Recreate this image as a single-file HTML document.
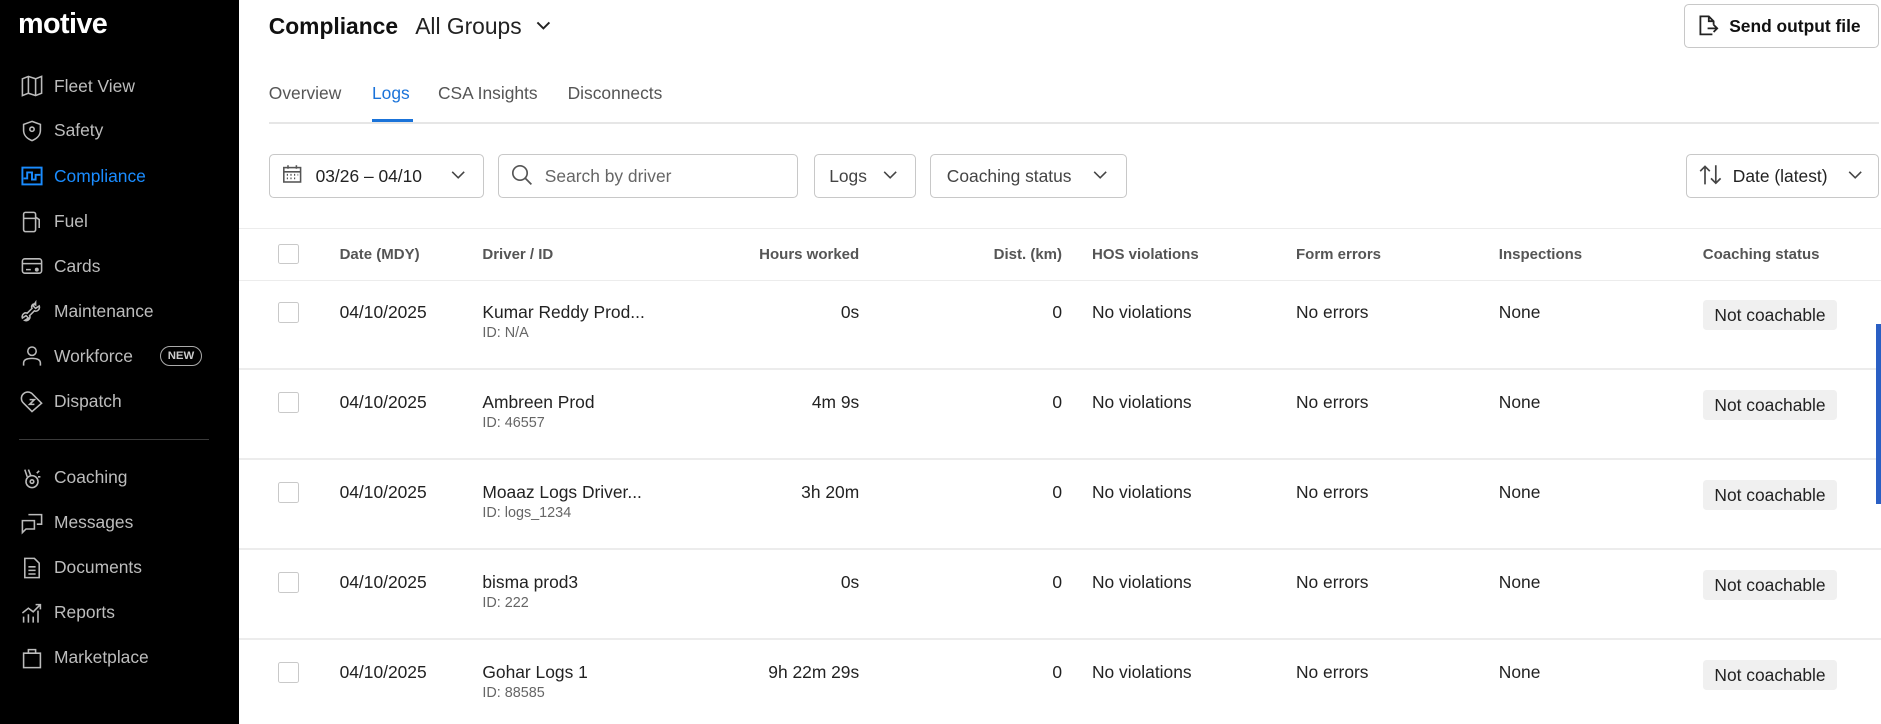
<!DOCTYPE html>
<html><head><meta charset="utf-8"><style>
html,body{margin:0;padding:0;background:#fff;overflow:hidden}
#r{zoom:1.2;width:1568px;height:603px;position:relative;font-family:"Liberation Sans",sans-serif;color:#222;overflow:hidden}
.a{position:absolute;white-space:nowrap}
.sb{left:0;top:0;width:199px;height:603px;background:#000}
.nav{left:45px;font-size:14.5px;color:#bdbdbd;line-height:18px}
.ic{left:17px;width:20px;height:20px}
.box{border:1px solid #c8c8c8;border-radius:4px;background:#fff;box-sizing:border-box}
.ft{font-size:14.5px;color:#444;line-height:18px}
.hd{font-size:12.5px;font-weight:bold;color:#555;top:205px}
.cell{font-size:14.5px;color:#222;line-height:18px}
.id{font-size:12px;color:#666}
.cb{left:232px;width:17px;height:17px;border:1px solid #c9c9c9;border-radius:2px;box-sizing:border-box}
.pill{left:1419px;width:112px;height:25px;background:#f0f0f0;border-radius:3px;font-size:14.5px;line-height:25px;text-align:center;color:#222}
.hl{height:1px;background:#ececec;left:199px;width:1369px}
</style></head><body><div id="r">
<div class="a sb"></div>
<div class="a" style="left:15px;top:7px;font-size:24px;font-weight:bold;color:#fff;letter-spacing:-0.5px">motive</div>
<svg class="a ic" style="top:62px" viewBox="0 0 20 20" fill="none" stroke="#bbb" stroke-width="1.3"><path d="M2 4l5-2 6 2 5-2v14l-5 2-6-2-5 2z M7 2v14 M13 4v14"/></svg>
<div class="a nav" style="top:63px">Fleet View</div>
<svg class="a ic" style="top:99px" viewBox="0 0 20 20" fill="none" stroke="#bbb" stroke-width="1.3"><path d="M10 2l7 2.5v5c0 4-3 7-7 8.5-4-1.5-7-4.5-7-8.5v-5z"/><circle cx="10" cy="8.5" r="1.8"/></svg>
<div class="a nav" style="top:100px">Safety</div>
<svg class="a ic" style="top:137px" viewBox="0 0 20 20" fill="none" stroke="#1a8cff" stroke-width="1.6"><rect x="2" y="3" width="16" height="14"/><path d="M3 12h3V7h4v6h3V9h4"/></svg>
<div class="a nav" style="top:138px;color:#1a8cff">Compliance</div>
<svg class="a ic" style="top:175px" viewBox="0 0 20 20" fill="none" stroke="#bbb" stroke-width="1.3"><rect x="3" y="2" width="10" height="16" rx="1.5"/><path d="M3 7h10 M13 6l3 2v7"/></svg>
<div class="a nav" style="top:176px">Fuel</div>
<svg class="a ic" style="top:212px" viewBox="0 0 20 20" fill="none" stroke="#bbb" stroke-width="1.3"><rect x="2" y="4" width="16" height="12" rx="2"/><path d="M2 8h16 M5 13h4"/><circle cx="14" cy="13" r="1" fill="#bbb"/></svg>
<div class="a nav" style="top:213px">Cards</div>
<svg class="a ic" style="top:250px" viewBox="0 0 20 20" fill="none" stroke="#bbb" stroke-width="1.3"><path d="M13 2l-2 3 2 2 3-2c1 3-2 5-4 4l-4 4c1 2-1 5-4 4l3-2-2-2-3 2c-1-3 2-5 4-4l4-4c-1-2 1-5 3-3z"/></svg>
<div class="a nav" style="top:251px">Maintenance</div>
<svg class="a ic" style="top:287px" viewBox="0 0 20 20" fill="none" stroke="#bbb" stroke-width="1.3"><circle cx="10" cy="6" r="3.5"/><path d="M3 18v-2c0-3 3-4 7-4s7 1 7 4v2"/></svg>
<div class="a nav" style="top:288px">Workforce</div>
<div class="a" style="left:133px;top:288px;width:34px;height:15px;border:1px solid #aaa;border-radius:9px;font-size:9.5px;font-weight:bold;color:#ccc;text-align:center;line-height:15px">NEW</div>
<svg class="a ic" style="top:325px" viewBox="0 0 20 20" fill="none" stroke="#bbb" stroke-width="1.3"><path d="M10 18l-7-7a5 5 0 0 1 7-8l1 1 7 7z"/><path d="M8 8h4l-4 4h4"/></svg>
<div class="a nav" style="top:326px">Dispatch</div>
<div class="a" style="left:16px;top:366px;width:158px;height:1px;background:#3a3a3a"></div>
<svg class="a ic" style="top:388px" viewBox="0 0 20 20" fill="none" stroke="#bbb" stroke-width="1.3"><circle cx="10" cy="13" r="5"/><circle cx="10" cy="13" r="1.5"/><path d="M6 9L4 3 M9 8l-2-5 M14 6l2-2 M15 9h2"/></svg>
<div class="a nav" style="top:389px">Coaching</div>
<svg class="a ic" style="top:426px" viewBox="0 0 20 20" fill="none" stroke="#bbb" stroke-width="1.3"><path d="M7 3h11v8h-4 M2 8h10v7H5l-3 3z"/></svg>
<div class="a nav" style="top:427px">Messages</div>
<svg class="a ic" style="top:463px" viewBox="0 0 20 20" fill="none" stroke="#bbb" stroke-width="1.3"><path d="M4 2h8l4 4v12H4z M7 9h6 M7 12h6 M7 15h6"/></svg>
<div class="a nav" style="top:464px">Documents</div>
<svg class="a ic" style="top:501px" viewBox="0 0 20 20" fill="none" stroke="#bbb" stroke-width="1.3"><path d="M3 18v-5 M7 18v-7 M11 18v-5 M15 18V8 M2 10l5-4 4 3 6-6 M13 3h4v4"/></svg>
<div class="a nav" style="top:502px">Reports</div>
<svg class="a ic" style="top:538px" viewBox="0 0 20 20" fill="none" stroke="#bbb" stroke-width="1.3"><path d="M3 6h14v12H3z M7 6V3h6v3"/></svg>
<div class="a nav" style="top:539px">Marketplace</div>

<div class="a" style="left:224px;top:11px;font-size:19px;font-weight:bold;color:#111">Compliance</div>
<div class="a" style="left:346px;top:11px;font-size:19px;color:#222">All Groups</div>
<svg class="a" style="left:446px;top:17px" width="14" height="10" viewBox="0 0 14 10" fill="none" stroke="#222" stroke-width="1.6"><path d="M2 2l5 5 5-5"/></svg>
<div class="a box" style="left:1403px;top:3px;width:163px;height:37px"></div>
<svg class="a" style="left:1415px;top:12px" width="18" height="19" viewBox="0 0 18 19" fill="none" stroke="#222" stroke-width="1.5"><path d="M12 17H2V2h7l4 4v3 M9 2v4h4 M8 12h8 M13 9l3 3-3 3"/></svg>
<div class="a" style="left:1441px;top:13px;font-size:14.5px;font-weight:bold;color:#111">Send output file</div>

<div class="a ft" style="left:224px;top:69px;color:#555">Overview</div>
<div class="a ft" style="left:310px;top:69px;color:#1a73d9">Logs</div>
<div class="a ft" style="left:365px;top:69px;color:#555">CSA Insights</div>
<div class="a ft" style="left:473px;top:69px;color:#555">Disconnects</div>
<div class="a" style="left:224px;top:102px;width:1342px;height:1px;background:#e6e6e6"></div>
<div class="a" style="left:310px;top:99px;width:34px;height:3px;background:#1a73d9"></div>

<div class="a box" style="left:224px;top:128px;width:179px;height:37px"></div>
<svg class="a" style="left:235px;top:137px" width="17" height="17" viewBox="0 0 17 17" fill="none" stroke="#555" stroke-width="1.3"><rect x="1.5" y="3" width="14" height="12"/><path d="M1.5 6.5h14 M5 1v3 M12 1v3"/><path d="M4 9h1M7 9h1M10 9h1M13 9h0.5M4 12h1M7 12h1M10 12h1" stroke-width="1.5"/></svg>
<div class="a ft" style="left:263px;top:138px;color:#222">03/26 – 04/10</div>
<svg class="a" style="left:376px;top:142px" width="12" height="8" viewBox="0 0 12 8" fill="none" stroke="#444" stroke-width="1.3"><path d="M1 1.5l5 5 5-5"/></svg>
<div class="a box" style="left:415px;top:128px;width:250px;height:37px"></div>
<svg class="a" style="left:426px;top:137px" width="18" height="18" viewBox="0 0 18 18" fill="none" stroke="#555" stroke-width="1.4"><circle cx="7.5" cy="7.5" r="6"/><path d="M12 12l5 5"/></svg>
<div class="a ft" style="left:454px;top:138px;color:#666">Search by driver</div>
<div class="a box" style="left:678px;top:128px;width:85px;height:37px"></div>
<div class="a ft" style="left:691px;top:138px">Logs</div>
<svg class="a" style="left:736px;top:142px" width="12" height="8" viewBox="0 0 12 8" fill="none" stroke="#444" stroke-width="1.3"><path d="M1 1.5l5 5 5-5"/></svg>
<div class="a box" style="left:775px;top:128px;width:164px;height:37px"></div>
<div class="a ft" style="left:789px;top:138px">Coaching status</div>
<svg class="a" style="left:911px;top:142px" width="12" height="8" viewBox="0 0 12 8" fill="none" stroke="#444" stroke-width="1.3"><path d="M1 1.5l5 5 5-5"/></svg>
<div class="a box" style="left:1405px;top:128px;width:161px;height:37px"></div>
<svg class="a" style="left:1416px;top:137px" width="20" height="18" viewBox="0 0 20 18" fill="none" stroke="#444" stroke-width="1.4"><path d="M5 17V2 M1 6l4-4 4 4 M14 1v15 M10 12l4 4 4-4"/></svg>
<div class="a ft" style="left:1444px;top:138px;color:#222">Date (latest)</div>
<svg class="a" style="left:1540px;top:142px" width="12" height="8" viewBox="0 0 12 8" fill="none" stroke="#444" stroke-width="1.3"><path d="M1 1.5l5 5 5-5"/></svg>

<div class="a hl" style="top:190px"></div>
<div class="a cb" style="top:203px"></div>
<div class="a hd" style="left:283px">Date (MDY)</div>
<div class="a hd" style="left:402px">Driver / ID</div>
<div class="a hd" style="left:600px;width:116px;text-align:right">Hours worked</div>
<div class="a hd" style="left:770px;width:115px;text-align:right">Dist. (km)</div>
<div class="a hd" style="left:910px">HOS violations</div>
<div class="a hd" style="left:1080px">Form errors</div>
<div class="a hd" style="left:1249px">Inspections</div>
<div class="a hd" style="left:1419px">Coaching status</div>
<div class="a hl" style="top:233px"></div>

<div class="a cb" style="top:252px"></div>
<div class="a cell" style="left:283px;top:252px">04/10/2025</div>
<div class="a cell" style="left:402px;top:252px">Kumar Reddy Prod...</div>
<div class="a id" style="left:402px;top:271px">ID: N/A</div>
<div class="a cell" style="left:560px;width:156px;text-align:right;top:252px">0s</div>
<div class="a cell" style="left:770px;width:115px;text-align:right;top:252px">0</div>
<div class="a cell" style="left:910px;top:252px">No violations</div>
<div class="a cell" style="left:1080px;top:252px">No errors</div>
<div class="a cell" style="left:1249px;top:252px">None</div>
<div class="a pill" style="top:250px">Not coachable</div>
<div class="a hl" style="top:307px"></div>

<div class="a cb" style="top:327px"></div>
<div class="a cell" style="left:283px;top:327px">04/10/2025</div>
<div class="a cell" style="left:402px;top:327px">Ambreen Prod</div>
<div class="a id" style="left:402px;top:346px">ID: 46557</div>
<div class="a cell" style="left:560px;width:156px;text-align:right;top:327px">4m 9s</div>
<div class="a cell" style="left:770px;width:115px;text-align:right;top:327px">0</div>
<div class="a cell" style="left:910px;top:327px">No violations</div>
<div class="a cell" style="left:1080px;top:327px">No errors</div>
<div class="a cell" style="left:1249px;top:327px">None</div>
<div class="a pill" style="top:325px">Not coachable</div>
<div class="a hl" style="top:382px"></div>

<div class="a cb" style="top:402px"></div>
<div class="a cell" style="left:283px;top:402px">04/10/2025</div>
<div class="a cell" style="left:402px;top:402px">Moaaz Logs Driver...</div>
<div class="a id" style="left:402px;top:421px">ID: logs_1234</div>
<div class="a cell" style="left:560px;width:156px;text-align:right;top:402px">3h 20m</div>
<div class="a cell" style="left:770px;width:115px;text-align:right;top:402px">0</div>
<div class="a cell" style="left:910px;top:402px">No violations</div>
<div class="a cell" style="left:1080px;top:402px">No errors</div>
<div class="a cell" style="left:1249px;top:402px">None</div>
<div class="a pill" style="top:400px">Not coachable</div>
<div class="a hl" style="top:457px"></div>

<div class="a cb" style="top:477px"></div>
<div class="a cell" style="left:283px;top:477px">04/10/2025</div>
<div class="a cell" style="left:402px;top:477px">bisma prod3</div>
<div class="a id" style="left:402px;top:496px">ID: 222</div>
<div class="a cell" style="left:560px;width:156px;text-align:right;top:477px">0s</div>
<div class="a cell" style="left:770px;width:115px;text-align:right;top:477px">0</div>
<div class="a cell" style="left:910px;top:477px">No violations</div>
<div class="a cell" style="left:1080px;top:477px">No errors</div>
<div class="a cell" style="left:1249px;top:477px">None</div>
<div class="a pill" style="top:475px">Not coachable</div>
<div class="a hl" style="top:532px"></div>

<div class="a cb" style="top:552px"></div>
<div class="a cell" style="left:283px;top:552px">04/10/2025</div>
<div class="a cell" style="left:402px;top:552px">Gohar Logs 1</div>
<div class="a id" style="left:402px;top:571px">ID: 88585</div>
<div class="a cell" style="left:560px;width:156px;text-align:right;top:552px">9h 22m 29s</div>
<div class="a cell" style="left:770px;width:115px;text-align:right;top:552px">0</div>
<div class="a cell" style="left:910px;top:552px">No violations</div>
<div class="a cell" style="left:1080px;top:552px">No errors</div>
<div class="a cell" style="left:1249px;top:552px">None</div>
<div class="a pill" style="top:550px">Not coachable</div>

<div class="a" style="left:1563px;top:270px;width:5px;height:150px;background:#2a5fc4"></div>
</div></body></html>
